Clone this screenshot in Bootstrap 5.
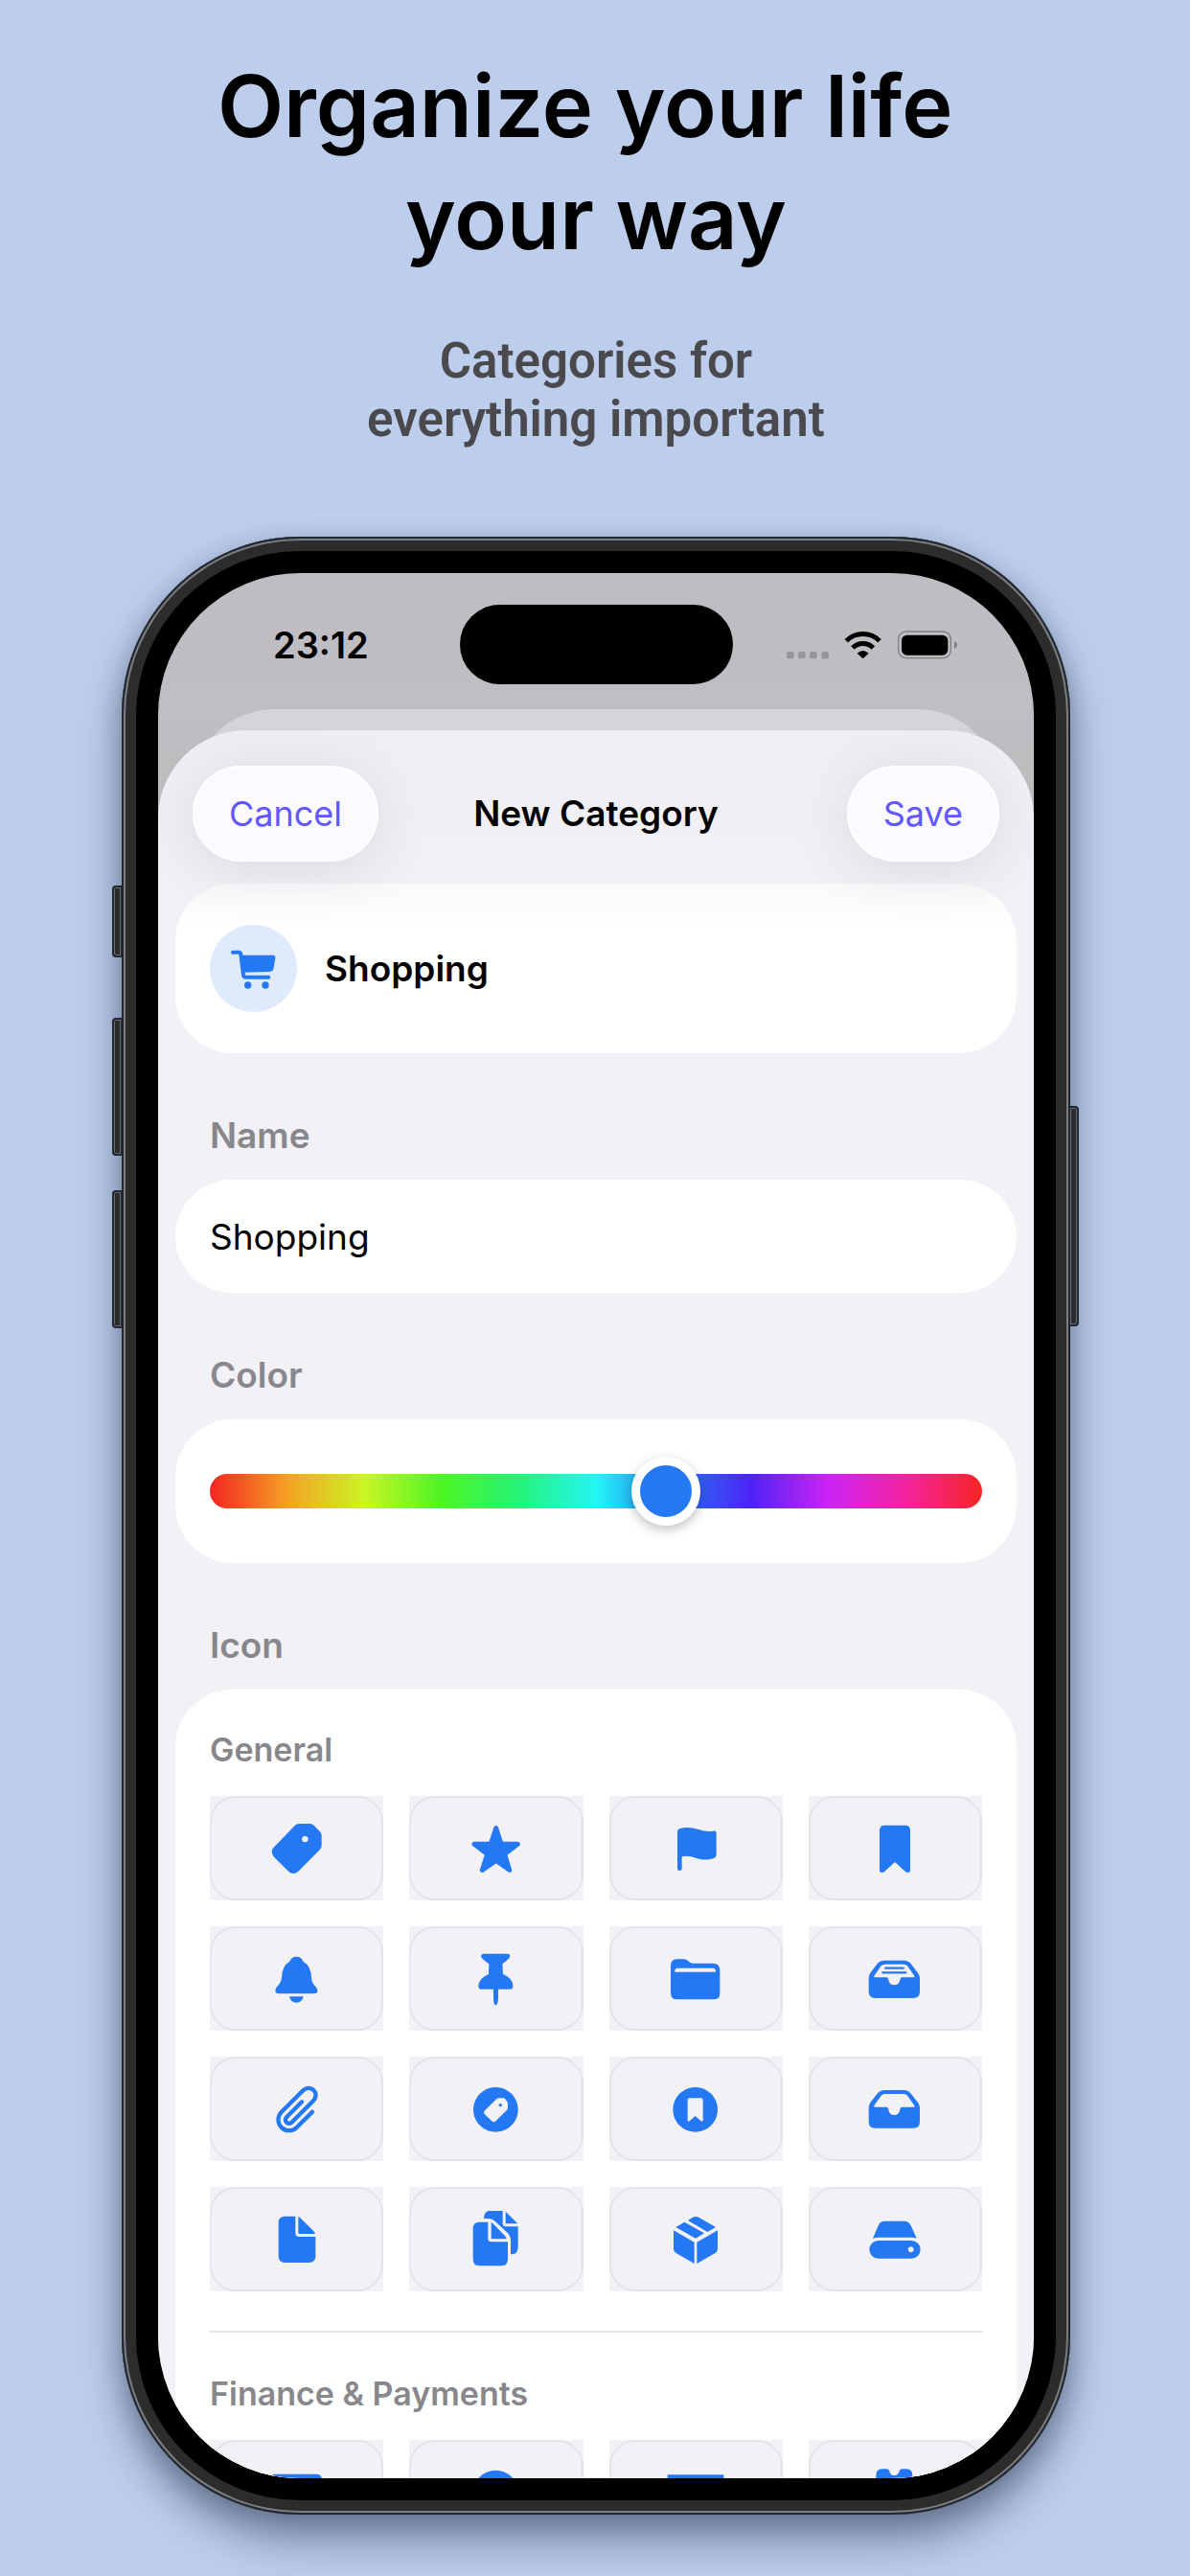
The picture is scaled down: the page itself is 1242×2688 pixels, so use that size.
<!DOCTYPE html>
<html lang="en">
<head>
<meta charset="utf-8">
<meta name="viewport" content="width=device-width, initial-scale=1">
<title>Organize your life your way</title>
<link href="https://cdn.jsdelivr.net/npm/bootstrap@5.3.0/dist/css/bootstrap.min.css" rel="stylesheet">
<style>
  :root { --accent: #2478f4; --ink-muted: #88878c; --surface: #f2f1f6; }
  body { background: #bdceed; color: #000; font-family: Inter, "Liberation Sans", sans-serif; overflow-x: hidden; }
  .promo { padding: 52px 125px 64px 127px; }
  .promo-title { font-size: 90px; line-height: 117px; font-weight: 600; margin-bottom: 60px; }
  .promo-sub { font-family: Roboto, "Liberation Sans", sans-serif; font-size: 51px; line-height: 61px; font-weight: 600; color: #4a4a4e; margin-bottom: 92px; }

  /* device */
  .phone { position: relative; padding: 38px; border-radius: 186px; background: #000;
    box-shadow: inset 0 0 0 2px #202833, inset 0 0 0 4px #7d7d7f, inset 0 0 0 15px #2c2c2c, 0 26px 44px rgba(25,35,60,.45), 0 6px 24px rgba(25,35,60,.2); }
  .side-key { position: absolute; width: 11px; background: #2c2c2c; border: 2px solid #202833; box-shadow: inset 0 0 0 1px #6a6b6e; }
  .side-key.on-left { left: -10px; border-radius: 4px 0 0 4px; }
  .side-key.on-right { right: -9px; border-radius: 0 4px 4px 0; }
  .key-action { top: 364px; height: 75px; }
  .key-up { top: 502px; height: 144px; }
  .key-down { top: 682px; height: 144px; }
  .key-power { top: 594px; height: 230px; }
  .screen { aspect-ratio: 913 / 1986; border-radius: 148px; overflow: hidden; background: linear-gradient(#bebdc2 0, #bfbec2 140px, #bdbdbf 260px); }

  .status-bar { display: grid; grid-template-columns: 1fr auto 1fr; align-items: center; padding: 33px 80px 26px 120px; }
  .clock { font-size: 38px; line-height: 48px; font-weight: 600; }
  .island { width: 285px; height: 83px; border-radius: 42px; background: #000; margin-right: 40px; }
  .back-sheet { height: 22px; margin: 0 36px; position: relative; }
  .back-sheet::before { content: ""; position: absolute; inset: 0 0 -80px; background: #d5d4d9; border-radius: 85px 85px 0 0; }
  .sheet { position: relative; background: linear-gradient(#efeef3, var(--surface) 200px); border-radius: 92px 92px 0 0; padding: 37px 18px 0; }
  .toolbar { display: grid; grid-template-columns: 1fr auto 1fr; align-items: center; padding: 0 18px; margin-bottom: 23px; }
  .toolbar h2 { font-size: 37px; line-height: 48px; font-weight: 600; margin: 0; }
  .pill { height: 100px; border-radius: 50px; border: 2px solid #fff; background: #fafaff; color: #6257fb; font-size: 36px; line-height: 48px; padding: 0 36px;
    box-shadow: 0 8px 60px rgba(60,60,80,.12); }
  .pill:hover { background: #fff; border-color: #fff; color: #6257fb; }

  .panel { background: #fff; border-radius: 60px; }
  .panel-preview { background: linear-gradient(#f9f9fa, #fff 50px); padding: 43px 36px; gap: 29px; font-size: 37px; line-height: 48px; font-weight: 600; }
  .avatar { width: 91px; height: 91px; background: #dfeafd; color: var(--accent); }
  .group-label { display: block; margin: 62px 36px 22px; font-size: 37px; line-height: 48px; font-weight: 600; color: var(--ink-muted); }
  .name-field { height: 118px; border: 0; border-radius: 59px; padding: 0 36px; font-size: 37px; line-height: 48px; color: #000; }
  .hue-panel { padding: 39px 36px; }
  .hue { display: block; height: 72px; }
  .hue::-webkit-slider-runnable-track { height: 36px; border-radius: 18px;
    background: linear-gradient(90deg, hsl(0,91%,55%), hsl(36,91%,55%), hsl(72,91%,55%), hsl(108,91%,55%), hsl(144,91%,55%), hsl(180,91%,55%), hsl(216,91%,55%), hsl(252,91%,55%), hsl(288,91%,55%), hsl(324,91%,55%), hsl(360,91%,55%)); }
  .hue::-webkit-slider-thumb { width: 72px; height: 72px; margin-top: -18px; border: 9px solid #fff; border-radius: 50%; background: var(--accent); box-shadow: 0 4px 12px rgba(0,0,0,.25); }
  .hue::-webkit-slider-thumb:active { background: var(--accent); }
  .icon-panel { border-radius: 60px 60px 0 0; padding: 35px 36px; }
  .icon-panel h3 { font-size: 34px; line-height: 56px; font-weight: 600; color: var(--ink-muted); margin: 0 0 20px; }
  .icon-grid { display: grid; grid-template-columns: repeat(4, 1fr); gap: 27px; }
  .tile { position: relative; height: 109px; padding: 0; border: 0; border-radius: 0; background: var(--surface); color: var(--accent); display: flex; align-items: center; justify-content: center; }
  .tile::before { content: ""; position: absolute; inset: 0; border: 2px solid #e4e3e8; border-radius: 27px; }
  .tile:hover { background: #eae9f0; color: var(--accent); }
  .divider { height: 2px; background: #e6e6e9; margin: 41px 0 36px; }
  .glyph { width: 60px; height: 60px; fill: currentColor; fill-rule: evenodd; }
  .line { fill: none; stroke: currentColor; stroke-linecap: round; stroke-linejoin: round; }
</style>
</head>
<body>
<main class="promo">
  <header class="text-center">
    <h1 class="promo-title">Organize your life&nbsp;<br>your way</h1>
    <p class="promo-sub">Categories for<br>everything important</p>
  </header>

  <div class="phone">
    <span class="side-key on-left key-action"></span>
    <span class="side-key on-left key-up"></span>
    <span class="side-key on-left key-down"></span>
    <span class="side-key on-right key-power"></span>
    <div class="screen">
      <div class="status-bar">
        <time class="clock">23:12</time>
        <div class="island"></div>
        <svg class="ms-auto" width="178" height="30" viewBox="600 353 534 90" aria-label="Wi-Fi on, battery full">
          <g fill="#97969a"><rect x="600" y="418" width="23" height="23" rx="8"/><rect x="636" y="418" width="23" height="23" rx="8"/><rect x="672" y="418" width="23" height="23" rx="8"/><rect x="709" y="418" width="23" height="23" rx="8"/></g>
          <path d="M787 385A74 74 0 0 1 891 385M807 407A45 45 0 0 1 871 407" fill="none" stroke="#000" stroke-width="15"/>
          <path d="M821 424Q839 408 857 424L839 441Z"/>
          <rect x="950" y="356" width="164" height="83" rx="24" fill="none" stroke="#7f7e82" stroke-width="4"/>
          <rect x="960" y="367" width="145" height="63" rx="17"/>
          <path d="M1125 386Q1134 391 1134 398Q1134 405 1125 411Z" fill="#7f7e82"/>
        </svg>
      </div>
      <div class="back-sheet"></div>

      <form class="sheet">
        <div class="toolbar">
          <button type="button" class="btn pill me-auto">Cancel</button>
          <h2>New Category</h2>
          <button type="button" class="btn pill ms-auto">Save</button>
        </div>

        <div class="panel panel-preview d-flex align-items-center">
          <span class="avatar rounded-circle d-flex align-items-center justify-content-center">
            <svg class="glyph" viewBox="405 242 180 180"><path class="line" stroke-width="12" d="M429 280H447Q453 280 454 286L462 351Q463 358 470 358H541"/><path d="M454 289H554Q563 289 562 298L557 328Q555 341 543 341L462 343Z"/><circle cx="476" cy="383" r="11"/><circle cx="531" cy="383" r="11"/></svg>
          </span>
          <span>Shopping</span>
        </div>

        <label class="group-label" for="name">Name</label>
        <input id="name" type="text" class="form-control name-field" value="Shopping">

        <label class="group-label" for="hue">Color</label>
        <div class="panel hue-panel">
          <input id="hue" type="range" class="form-range hue" min="0" max="360" value="216">
        </div>

        <div class="group-label">Icon</div>
        <div class="panel icon-panel">
          <h3>General</h3>
          <div class="icon-grid">
            <button type="button" class="btn tile" aria-label="Tag"><svg class="glyph" viewBox="240 355 180 180"><path d="M337 367H371Q378 367 383 372L401 391Q407 397 407 404V435Q407 443 401 449L334 516Q327 523 318 523Q310 523 304 517L258 471Q251 464 251 455Q251 447 257 441L323 373Q329 367 337 367ZM355 405a10 10 0 1 0 .1 0Z"/></svg></button>
            <button type="button" class="btn tile" aria-label="Star"><svg class="glyph" viewBox="864 355 180 180"><path stroke="currentColor" stroke-width="15" stroke-linejoin="round" d="M953 381L969 430L1021 431L980 462L995 512L953 482L910 512L926 462L885 431L937 430Z"/></svg></button>
            <button type="button" class="btn tile" aria-label="Flag"><svg class="glyph" viewBox="226 355 180 180"><path d="M259 392Q259 386 265 383Q292 374 325 385Q350 393 370 390Q381 388 381 396V464Q381 472 373 475Q347 485 316 474Q293 465 273 470V507a7 7 0 0 1-14 0Z"/></svg></button>
            <button type="button" class="btn tile" aria-label="Bookmark"><svg class="glyph" viewBox="850 355 180 180"><path d="M892 388Q892 372 908 372H972Q988 372 988 388V513Q988 520 981 520Q976 520 972 516L940 487L908 516Q904 520 899 520Q892 520 892 513Z"/></svg></button>

            <button type="button" class="btn tile" aria-label="Bell"><svg class="glyph" viewBox="240 763 180 180"><path d="M328 783Q343 783 349 798Q374 812 375 848Q375 862 381 869Q394 882 394 889Q394 899 384 899H272Q262 899 262 889Q262 882 275 869Q281 862 282 848Q283 812 307 798Q313 783 328 783ZM306 908H350Q346 927 328 927Q310 927 306 908Z"/></svg></button>
            <button type="button" class="btn tile" aria-label="Pin"><svg class="glyph" viewBox="864 763 180 180"><path d="M916 774H988Q997 774 997 782Q996 790 973 806L975 838Q1006 850 1006 876Q1006 885 997 885H960V915Q958 935 952 935Q946 935 945 915V885H907Q898 885 898 876Q899 850 930 838L931 806Q907 790 906 782Q906 774 916 774Z"/></svg></button>
            <button type="button" class="btn tile" aria-label="Folder"><svg class="glyph" viewBox="226 763 180 180"><path d="M238 812Q238 791 259 791H278Q287 791 293 797Q300 804 306 804H370Q392 804 392 826V897Q392 917 372 917H258Q238 917 238 897ZM251 831V828Q251 819 260 819H370Q379 819 379 828V831Z"/></svg></button>
            <button type="button" class="btn tile" aria-label="Full tray"><svg class="glyph" viewBox="850 763 180 180"><path d="M906 795H970Q981 795 988 803L1012 834Q1018 841 1018 850V893Q1018 913 998 913H878Q858 913 858 893V850Q858 841 863 834L887 803Q894 795 906 795ZM908 807Q901 807 897 812L875 843Q873 848 877 848H913Q919 848 920 855Q922 872 938 872Q954 872 956 855Q957 848 963 848H999Q1003 848 1001 843L979 812Q975 807 968 807Z"/><path class="line" stroke-width="7" d="M911 819H966M902 833H974"/></svg></button>

            <button type="button" class="btn tile" aria-label="Paperclip"><svg class="glyph" viewBox="240 153 180 180"><path class="line" stroke-width="13" d="M378 251L328 301A34 34 0 0 1 280 253L350 183A22 22 0 0 1 382 215L313 284A11 11 0 0 1 297 268L345 220"/></svg></button>
            <button type="button" class="btn tile" aria-label="Tag badge"><svg class="glyph" viewBox="864 153 180 180"><path d="M952 174a70 70 0 1 0 .1 0ZM963 208Q957 208 953 212L918 247Q912 253 918 259L939 279Q946 286 953 279L986 247Q990 243 990 238V226Q990 222 988 219L983 212Q980 208 976 208ZM967 225a5 5 0 1 1-.1 0Z"/></svg></button>
            <button type="button" class="btn tile" aria-label="Bookmark badge"><svg class="glyph" viewBox="226 153 180 180"><path d="M315 174a70 70 0 1 0 .1 0ZM291 214Q291 208 297 208H333Q339 208 339 214V277Q339 284 333 280L315 264L297 280Q291 284 291 277Z"/></svg></button>
            <button type="button" class="btn tile" aria-label="Tray"><svg class="glyph" viewBox="850 765 180 180"><path d="M906 795H970Q981 795 988 803L1012 834Q1018 841 1018 850V893Q1018 914 998 914H878Q858 914 858 893V850Q858 841 863 834L887 803Q894 795 906 795ZM908 807Q901 807 897 812L875 843Q873 848 877 848H913Q919 848 920 855Q922 873 938 873Q954 873 956 855Q957 848 963 848H999Q1003 848 1001 843L979 812Q975 807 968 807Z"/></svg></button>

            <button type="button" class="btn tile" aria-label="Document"><svg class="glyph" viewBox="240 562 180 180"><path d="M325 579V632Q325 643 336 643H388V704Q388 724 368 724H292Q272 724 272 704V599Q272 579 292 579ZM334 580Q339 582 342 586L381 624Q386 629 387 634H338Q334 634 334 630Z"/></svg></button>
            <button type="button" class="btn tile" aria-label="Documents"><svg class="glyph" viewBox="864 562 180 180"><path d="M928 597V649Q928 659 938 659H990V713Q990 734 970 734H901Q881 734 881 713V617Q881 597 901 597ZM938 598Q942 600 945 603L981 640Q985 645 986 650H941Q938 650 938 647ZM915 586Q915 561 938 561H974V602Q974 611 983 611H1022V675Q1022 698 999 698V655Q999 641 990 632L950 594Q941 586 930 586ZM983 564L1021 602H986Q983 602 983 599Z"/></svg></button>
            <button type="button" class="btn tile" aria-label="Box"><svg class="glyph" viewBox="226 562 180 180"><path d="M281 597L343 632L316 648L254 613ZM292 592L305 584Q316 577 327 583L379 613L353 628ZM247 623L312 660V727L256 695Q247 690 247 680ZM385 623L320 660V727L376 695Q385 690 385 680Z"/></svg></button>
            <button type="button" class="btn tile" aria-label="Drive"><svg class="glyph" viewBox="850 562 180 180"><path d="M871 648L888 608Q893 594 908 594H970Q984 594 990 608L1008 648Q1000 645 990 645H889Q880 645 871 648ZM888 655H992a28 28 0 0 1 0 56H888a28 28 0 0 1 0-56ZM990 674a9 9 0 1 0 .1 0Z"/></svg></button>
          </div>
          <div class="divider"></div>
          <h3>Finance &amp; Payments</h3>
          <div class="icon-grid">
            <button type="button" class="btn tile" aria-label="Credit card"><svg class="glyph" viewBox="0 0 180 180"><path d="M18 32H150Q168 32 168 50V60H12V50Q12 32 18 32ZM12 74H168V130Q168 148 150 148H30Q12 148 12 130Z"/></svg></button>
            <button type="button" class="btn tile" aria-label="Coin"><svg class="glyph" viewBox="0 0 180 180"><circle cx="88" cy="90" r="70"/></svg></button>
            <button type="button" class="btn tile" aria-label="Banknote"><svg class="glyph" viewBox="0 0 180 180"><path d="M2 34H178V146H2ZM90 64a26 26 0 1 0 .1 0Z"/></svg></button>
            <button type="button" class="btn tile" aria-label="Wallet"><svg class="glyph" viewBox="0 0 180 180"><path d="M50 16H62Q73 16 74 26Q78 36 88 36Q98 36 103 26Q104 16 115 16H126Q145 16 145 36V164H31V36Q31 16 50 16Z"/></svg></button>
          </div>
        </div>
      </form>
    </div>
  </div>
</main>
<script src="https://cdn.jsdelivr.net/npm/bootstrap@5.3.0/dist/js/bootstrap.bundle.min.js"></script>
</body>
</html>
